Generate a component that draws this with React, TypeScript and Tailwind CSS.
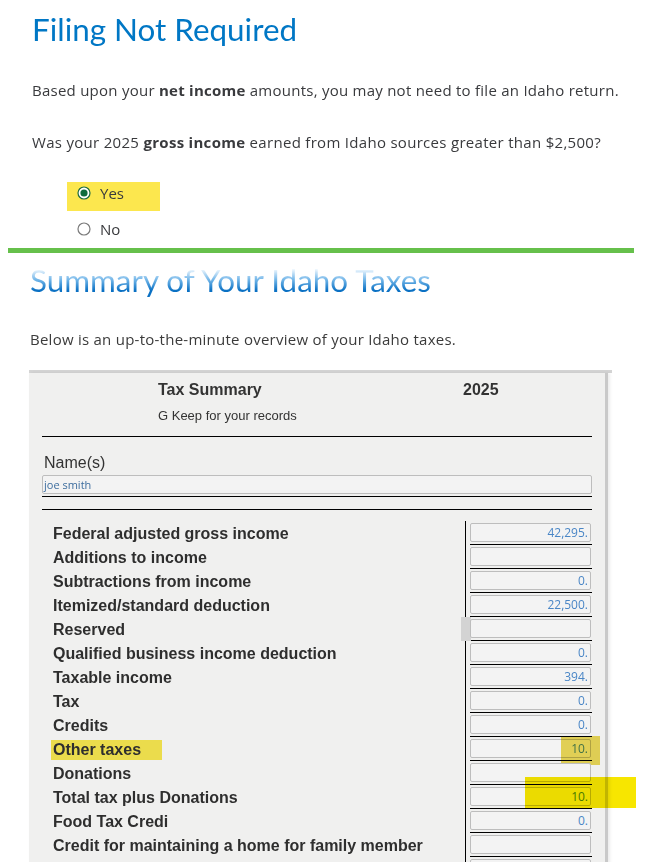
import React from 'react'

type Row = {
  label: string
  value: string
  mark?: 'label' | 'value' | 'total' | 'focus'
}

const rows: Row[] = [
  { label: 'Federal adjusted gross income', value: '42,295.' },
  { label: 'Additions to income', value: '' },
  { label: 'Subtractions from income', value: '0.' },
  { label: 'Itemized/standard deduction', value: '22,500.' },
  { label: 'Reserved', value: '', mark: 'focus' },
  { label: 'Qualified business income deduction', value: '0.' },
  { label: 'Taxable income', value: '394.' },
  { label: 'Tax', value: '0.' },
  { label: 'Credits', value: '0.' },
  { label: 'Other taxes', value: '10.', mark: 'value' },
  { label: 'Donations', value: '' },
  { label: 'Total tax plus Donations', value: '10.', mark: 'total' },
  { label: 'Food Tax Credi', value: '0.' },
  { label: 'Credit for maintaining a home for family member', value: '' },
  { label: '', value: '' },
]

function Radio({ checked }: { checked: boolean }) {
  return (
    <svg width="14" height="14" viewBox="0 0 14 14" className="shrink-0">
      <circle cx="7" cy="7" r="6" fill="#fff" stroke={checked ? '#1c6b40' : '#7a7a7a'} strokeWidth="1.2" />
      {checked && <circle cx="7" cy="7" r="3.6" fill="#0e6b3c" />}
    </svg>
  )
}

function SummaryRow({ row }: { row: Row }) {
  return (
    <div className="flex h-[24px]">
      <div className="w-[423px] shrink-0 pl-[11px] pt-[2px] flex items-center">
        <span
          className={`text-[16px] leading-[20px] font-bold text-[#2e2e2e] ${
            row.mark === 'value' ? 'bg-[#ebdc4c] -ml-[2px] pl-[2px] pr-[21px]' : ''
          }`}
        >
          {row.label}
        </span>
      </div>
      <div className="relative w-[127px] shrink-0 border-l border-black pl-[4px]">
        {row.mark === 'focus' && (
          <div className="absolute left-[-5px] top-0 w-[10px] h-[24px] bg-[#d3d3d3]" />
        )}
        <div className="relative mt-[2px] h-[19px] w-[121px] rounded-[2px] border border-[#bdbdbd] bg-[#f3f3f3] flex items-center justify-end pr-[2px]">
          <span className="font-['Open_Sans',sans-serif] text-[12px] leading-[14px] text-[#4a86c6]">
            {row.value}
          </span>
        </div>
        <div className="mt-[2px] h-px w-[122px] bg-black" />
        {row.mark === 'value' && (
          <div className="absolute left-[95px] top-[-1px] w-[39px] h-[29px] bg-[#e9d43c]/85 mix-blend-multiply" />
        )}
        {row.mark === 'total' && (
          <div className="absolute left-[59px] top-[-8px] w-[111px] h-[31px] bg-[#f7e600] mix-blend-multiply" />
        )}
      </div>
    </div>
  )
}

export default function App() {
  return (
    <div className="w-[648px] h-[862px] overflow-hidden bg-white font-['Open_Sans',sans-serif] text-[#393a3d]">
      <div className="pl-[32px] pt-[10px]">
        <h1 className="font-['Lato',sans-serif] text-[31.4px] leading-[38px] text-[#0077c5]">Filing Not Required</h1>
        <p className="mt-[31px] text-[15px] leading-[22px] tracking-[0.25px]">
          Based upon your <b className="font-bold">net income</b> amounts, you may not need to file an Idaho return.
        </p>
        <p className="mt-[30px] text-[15px] leading-[22px] tracking-[0.3px]">
          Was your 2025 <b className="font-bold">gross income</b> earned from Idaho sources greater than $2,500?
        </p>
      </div>

      <div className="ml-[67px] mt-[29px] text-[15px]">
        <div className="w-[93px] h-[29px] bg-[#fce74e]">
          <label className="flex items-center h-[22px] pl-[10px] gap-[9px]">
            <Radio checked />
            <span>Yes</span>
          </label>
        </div>
        <label className="mt-[7px] flex items-center h-[22px] pl-[10px] gap-[9px]">
          <Radio checked={false} />
          <span>No</span>
        </label>
      </div>

      <div className="ml-[8px] mt-[8px] w-[626px] h-[5px] bg-[#66c04b]" />

      <div className="pl-[30px] pt-[8px]">
        <h2 className="font-['Lato',sans-serif] text-[31.4px] leading-[38px] w-fit bg-[linear-gradient(to_bottom,#eef7fe_22%,#6fb4e8_50%,#0a70c3_78%)] bg-clip-text text-transparent">
          Summary of Your Idaho Taxes
        </h2>
        <p className="mt-[29px] text-[15px] leading-[22px] tracking-[0.25px] text-[#3b3b3b]">
          Below is an up-to-the-minute overview of your Idaho taxes.
        </p>
      </div>

      <div className="ml-[29px] mt-[20px] w-[583px] border-t-[3px] border-[#d4d4d4]">
        <div className="w-[579px] h-[600px] bg-[#f0f0ef] border-r-[3px] border-[#c9c9c9] shadow-[2px_0_3px_rgba(0,0,0,0.08)] font-['Liberation_Sans',Arial,sans-serif] text-[#333]">
          <div className="mx-[13px]">
            <div className="pt-[8px] pl-[116px] flex">
              <div className="w-[305px]">
                <div className="text-[16px] leading-[18px] font-bold">Tax Summary</div>
                <div className="mt-[9px] text-[13px] leading-[15px]">G Keep for your records</div>
              </div>
              <div className="text-[16px] leading-[18px] font-bold">2025</div>
            </div>
            <div className="mt-[13px] h-px bg-black" />
            <div className="mt-[17px] ml-[2px] text-[16px] leading-[18px]">Name(s)</div>
            <div className="mt-[3px] h-[19px] rounded-[2px] border border-[#bdbdbd] bg-[#f3f3f3] flex items-center pl-[1px]">
              <span className="font-['Open_Sans',sans-serif] text-[11px] leading-[14px] text-[#3d6d9e]">joe smith</span>
            </div>
            <div className="mt-[2px] h-px bg-black" />
            <div className="mt-[12px] h-px bg-black" />
            <div className="mt-[11px]">
              {rows.map((row, i) => (
                <SummaryRow key={i} row={row} />
              ))}
            </div>
          </div>
        </div>
      </div>
    </div>
  )
}
